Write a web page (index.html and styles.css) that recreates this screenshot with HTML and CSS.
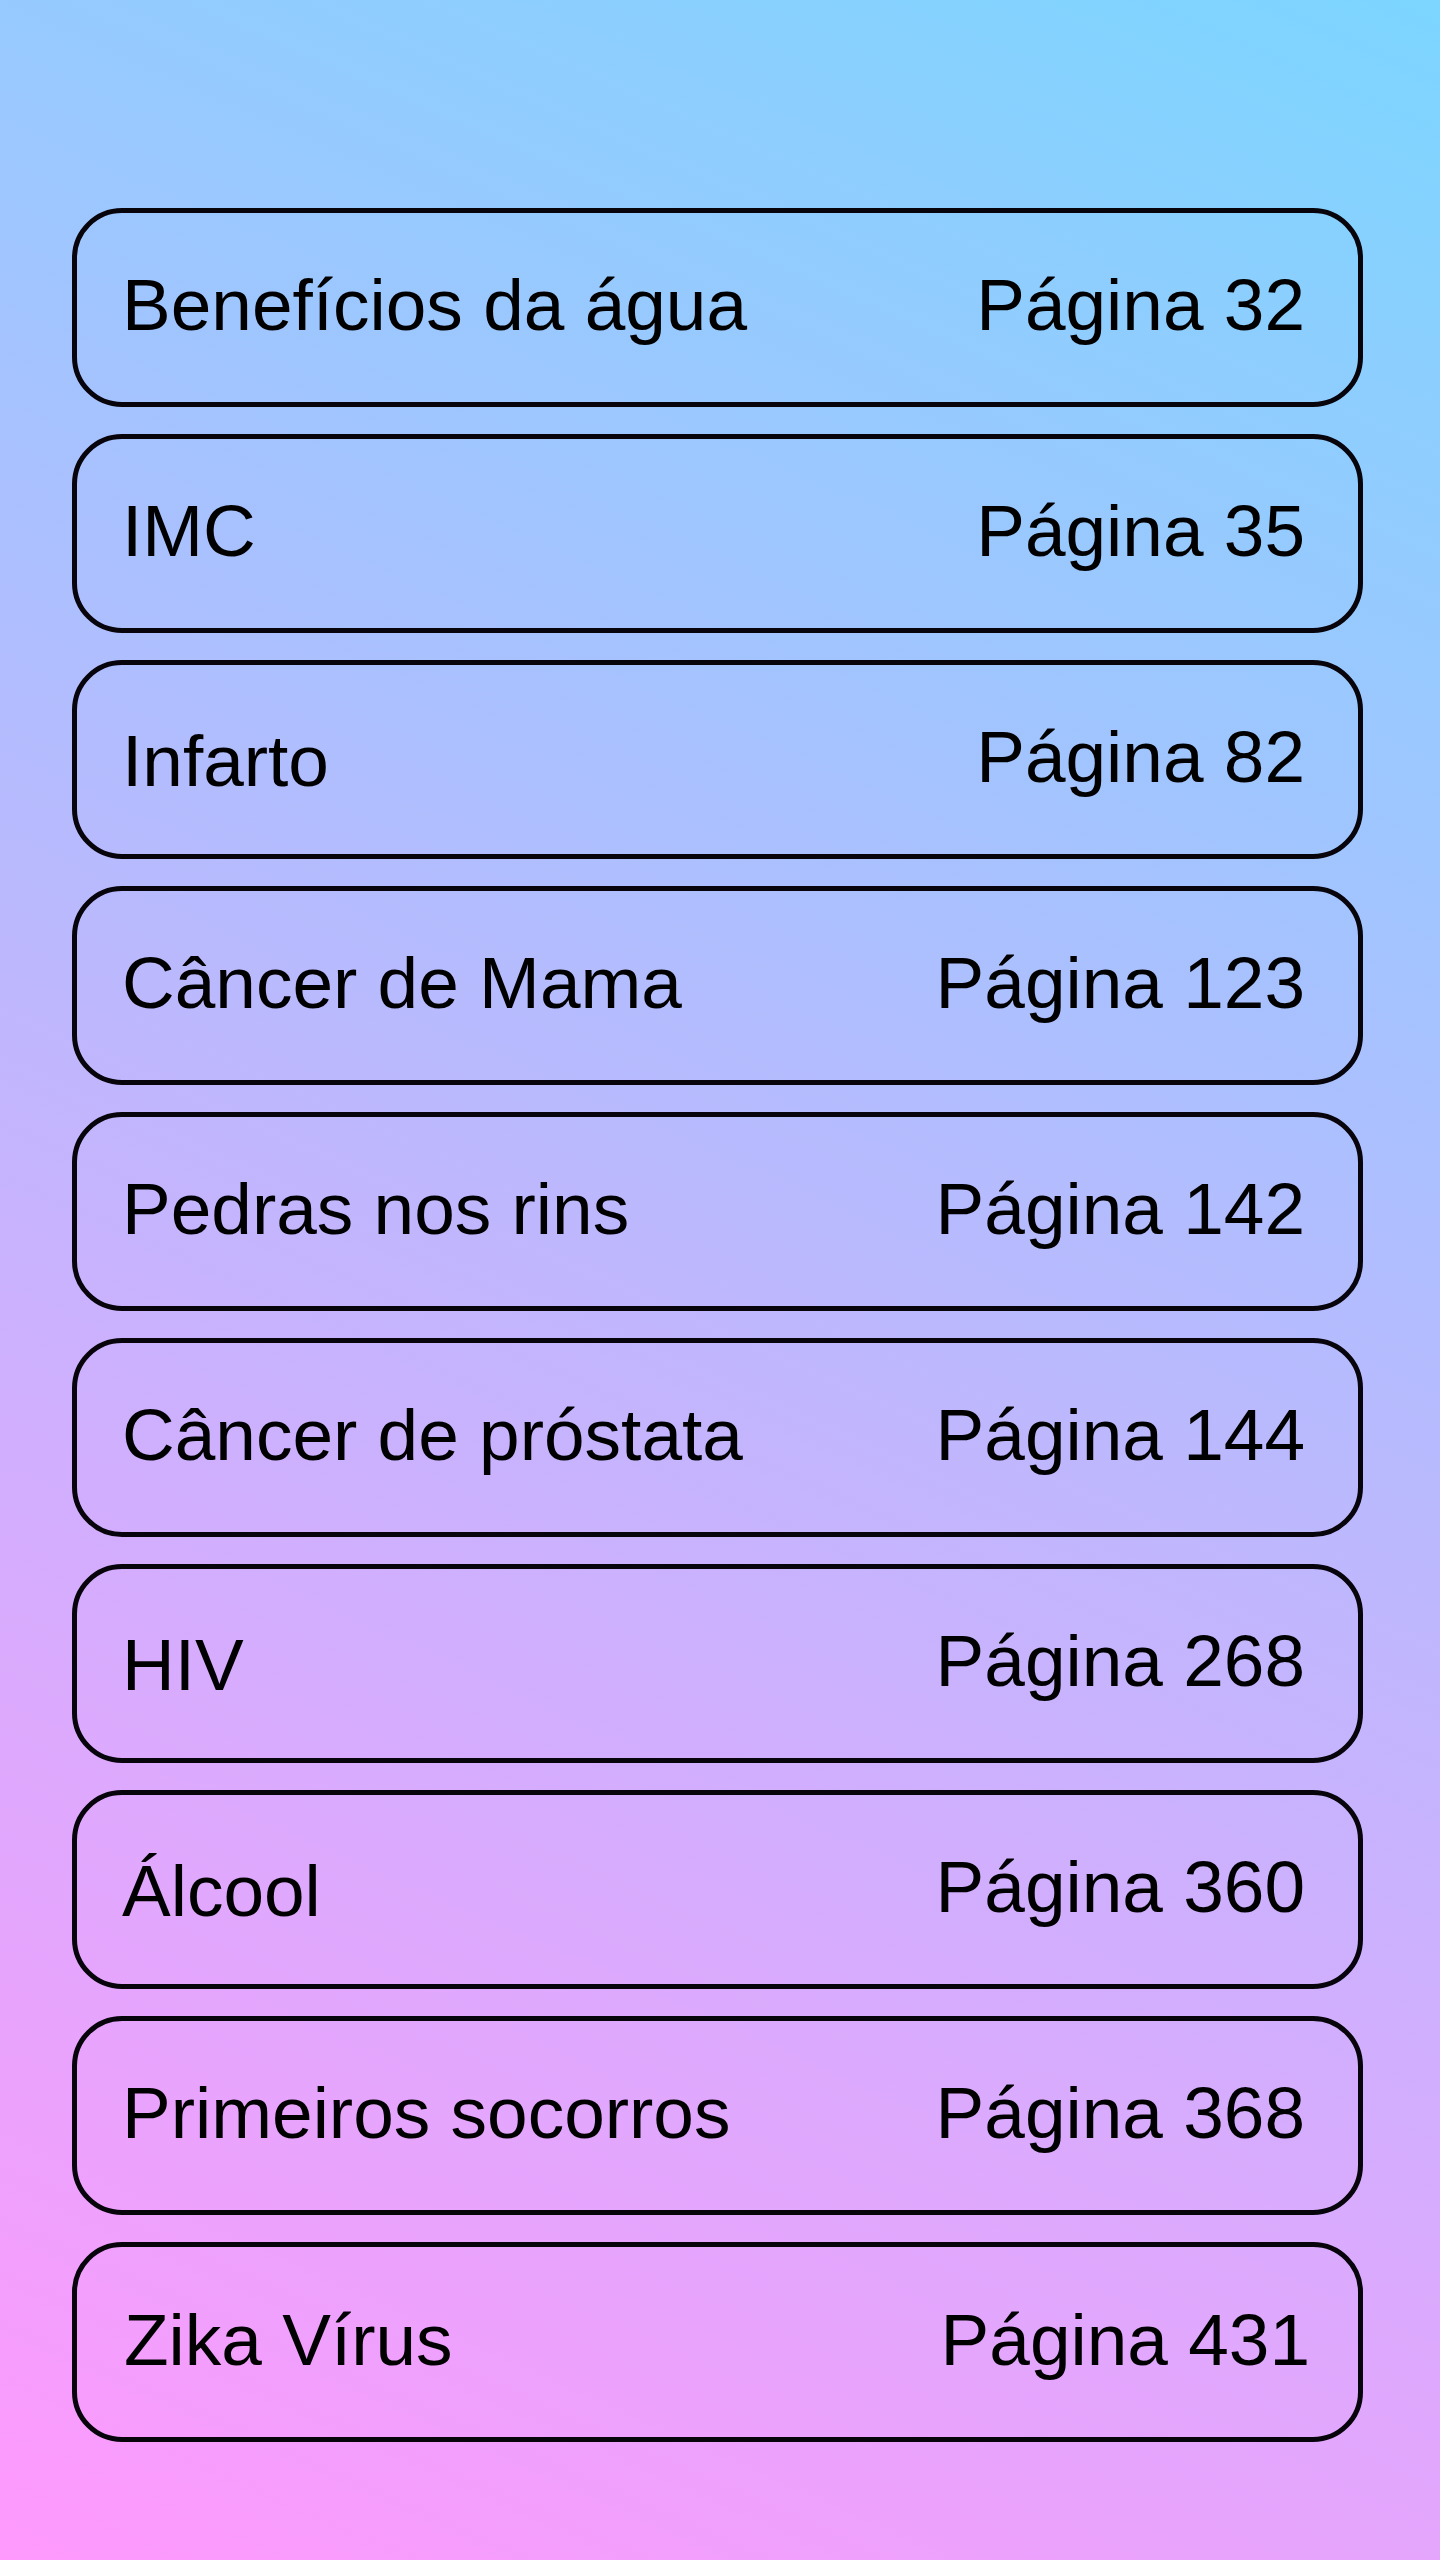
FILE: index.html
```html
<!DOCTYPE html>
<html lang="pt-BR">
<head>
<meta charset="utf-8">
<title>Índice</title>
<link rel="stylesheet" href="styles.css">
</head>
<body>
<main class="page">
  <ul class="index-list">
    <li class="entry"><span class="topic">Benefícios da água</span><span class="pageno">Página 32</span></li>
    <li class="entry"><span class="topic">IMC</span><span class="pageno">Página 35</span></li>
    <li class="entry"><span class="topic topic-low">Infarto</span><span class="pageno">Página 82</span></li>
    <li class="entry"><span class="topic">Câncer de Mama</span><span class="pageno">Página 123</span></li>
    <li class="entry"><span class="topic">Pedras nos rins</span><span class="pageno">Página 142</span></li>
    <li class="entry"><span class="topic">Câncer de próstata</span><span class="pageno">Página 144</span></li>
    <li class="entry"><span class="topic topic-low">HIV</span><span class="pageno">Página 268</span></li>
    <li class="entry"><span class="topic topic-low">Álcool</span><span class="pageno">Página 360</span></li>
    <li class="entry"><span class="topic">Primeiros socorros</span><span class="pageno">Página 368</span></li>
    <li class="entry entry-last"><span class="topic">Zika Vírus</span><span class="pageno">Página 431</span></li>
  </ul>
</main>
</body>
</html>
```

FILE: styles.css
```css
html, body {
  margin: 0;
  padding: 0;
}

body {
  width: 1440px;
  min-height: 2560px;
  background: linear-gradient(24deg, #ff99fd 0%, #7cd6ff 100%);
  font-family: "Liberation Sans", Arial, sans-serif;
  color: #000;
}

.page {
  box-sizing: border-box;
  width: 1440px;
  min-height: 2560px;
  padding: 208px 77px 0 72px;
}

.index-list {
  list-style: none;
  margin: 0;
  padding: 0;
  display: flex;
  flex-direction: column;
  gap: 27px;
}

.entry {
  box-sizing: border-box;
  height: 199px;
  border: 5px solid #08040c;
  border-radius: 50px;
  display: flex;
  align-items: center;
  justify-content: space-between;
  padding: 0 53px 6px 45px;
  font-size: 73px;
  line-height: 1;
}

.entry-last {
  padding-left: 47px;
  padding-right: 48px;
  height: 200px;
}

.topic,
.pageno {
  white-space: nowrap;
}

.topic-low {
  padding-top: 8px;
}
```
